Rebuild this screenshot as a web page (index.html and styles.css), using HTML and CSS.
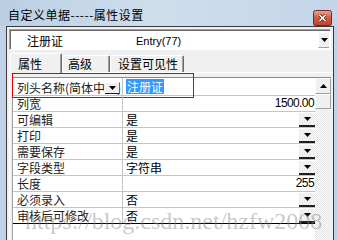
FILE: index.html
```html
<!DOCTYPE html>
<html lang="zh">
<head>
  <meta charset="UTF-8">
  <title>属性设置</title>
  <link rel="stylesheet" href="styles.css">
</head>
<body>
  <div class="window">
    <!-- Title bar -->
    <div class="titlebar">
      <span class="title">自定义单据-----属性设置</span>
      <span class="close">
        <svg width="19" height="16" viewBox="0 0 19 16">
          <defs>
            <linearGradient id="cg" x1="0" y1="0" x2="0" y2="1">
              <stop offset="0" stop-color="#e9a898"/>
              <stop offset="0.5" stop-color="#d25a43"/>
              <stop offset="1" stop-color="#c2402e"/>
            </linearGradient>
          </defs>
          <rect x="0.5" y="0.5" width="18" height="15" rx="2" fill="url(#cg)" stroke="#6d2b22"/>
          <path d="M6.5 5l6 6M12.5 5l-6 6" stroke="#4a1e16" stroke-width="3"/>
          <path d="M6.5 5l6 6M12.5 5l-6 6" stroke="#fff" stroke-width="1.6"/>
        </svg>
      </span>
    </div>

    <div class="client">
      <!-- Field selector -->
      <div class="combo">
        <span class="combo-name">注册证</span>
        <span class="combo-code">Entry(77)</span>
        <span class="combo-btn">
          <svg width="7" height="4" viewBox="0 0 7 4"><polygon points="0,0 7,0 3.5,4" fill="#000"/></svg>
        </span>
      </div>

      <!-- Tabs -->
      <div class="tabs">
        <div class="tab active">属性</div>
        <div class="tab t2">高级</div>
        <div class="tab t3">设置可见性</div>
      </div>

      <!-- Property grid -->
      <div class="panel">
        <div class="grid">
          <div class="rows">
            <div class="row first">
              <div class="key">列头名称(简体中文)
                <span class="key-btn">
                  <svg width="7" height="4" viewBox="0 0 7 4"><polygon points="0,0 7,0 3.5,4" fill="#000"/></svg>
                </span>
              </div>
              <div class="val"><span class="sel">注册证</span></div>
            </div>
            <div class="row"><div class="key">列宽</div><div class="val num">1500.00</div></div>
            <div class="row"><div class="key">可编辑</div><div class="val">是<span class="dd"><svg width="7" height="4" viewBox="0 0 7 4"><polygon points="0,0 7,0 3.5,4" fill="#000"/></svg></span></div></div>
            <div class="row"><div class="key">打印</div><div class="val">是<span class="dd"><svg width="7" height="4" viewBox="0 0 7 4"><polygon points="0,0 7,0 3.5,4" fill="#000"/></svg></span></div></div>
            <div class="row"><div class="key">需要保存</div><div class="val">是<span class="dd"><svg width="7" height="4" viewBox="0 0 7 4"><polygon points="0,0 7,0 3.5,4" fill="#000"/></svg></span></div></div>
            <div class="row"><div class="key">字段类型</div><div class="val">字符串<span class="dd"><svg width="7" height="4" viewBox="0 0 7 4"><polygon points="0,0 7,0 3.5,4" fill="#000"/></svg></span></div></div>
            <div class="row"><div class="key">长度</div><div class="val num">255</div></div>
            <div class="row"><div class="key">必须录入</div><div class="val">否<span class="dd"><svg width="7" height="4" viewBox="0 0 7 4"><polygon points="0,0 7,0 3.5,4" fill="#000"/></svg></span></div></div>
            <div class="row last"><div class="key">审核后可修改</div><div class="val">否<span class="dd"><svg width="7" height="4" viewBox="0 0 7 4"><polygon points="0,0 7,0 3.5,4" fill="#000"/></svg></span></div></div>
          </div>
          <div class="vscroll">
            <div class="sb-btn">
              <svg width="7" height="4" viewBox="0 0 7 4"><polygon points="0,4 7,4 3.5,0" fill="#000"/></svg>
            </div>
            <div class="sb-thumb"></div>
            <div class="sb-track"></div>
          </div>
        </div>
      </div>
    </div>

    <div class="watermark">https://blog.csdn.net/hzfw2008</div>
  </div>
</body>
</html>
```

FILE: styles.css
```css
* {
  box-sizing: border-box;
}
body {
  margin: 0;
  width: 337px;
  height: 240px;
  overflow: hidden;
  background-color: #c0d2e6;
  font-family: "Noto Sans CJK SC", sans-serif;
  font-size: 12px;
  color: #000;
}
.window {
  position: relative;
  height: 240px;
  display: flex;
  flex-direction: column;
}
.titlebar {
  height: 26px;
  flex: none;
  display: flex;
  align-items: flex-start;
  padding: 0 5px 0 8px;
  background: linear-gradient(to right, #bacee4, #cfdeed 45%, #c3d5e9);
}
.title {
  margin-top: 8px;
  line-height: 14px;
  letter-spacing: 0.5px;
}
.close {
  margin-left: auto;
  margin-top: 10px;
  height: 16px;
  display: flex;
}
.client {
  flex: 1;
  margin: 0 3px 0 6px;
  border: 1px solid #3a3a3a;
  border-bottom: none;
  background-color: #f0f0f0;
  display: flex;
  flex-direction: column;
  min-height: 0;
}
.combo {
  margin: 2px 2px 0 2px;
  height: 21px;
  flex: none;
  display: flex;
  align-items: center;
  background-color: #fff;
  border: 1px solid;
  border-color: #a0a0a0 #fff #fff #a0a0a0;
  box-shadow: inset 1px 1px #696969;
  padding-top: 3px;
}
.combo-name {
  width: 126px;
  padding-left: 17px;
  line-height: 14px;
}
.combo-code {
  font-family: "Liberation Sans", sans-serif;
  font-size: 11px;
  line-height: 14px;
}
.combo-btn {
  margin-left: auto;
  margin-right: 1px;
  margin-top: -1px;
  width: 11px;
  height: 15px;
  display: flex;
  align-items: center;
  justify-content: center;
  background-color: #f0f0f0;
  border-left: 1px solid #fff;
  border-bottom: 1px solid #a0a0a0;
}
.tabs {
  display: flex;
  align-items: flex-end;
  height: 19px;
  flex: none;
  margin-top: 3px;
  padding-left: 3px;
}
.tab {
  width: 48px;
  height: 17px;
  padding-left: 5px;
  line-height: 15px;
  border-top: 1px solid #fff;
  border-left: 1px solid #fff;
  border-right: 1px solid #696969;
  border-radius: 2px 2px 0 0;
  box-shadow: inset -1px 0 #a0a0a0;
}
.tab.active {
  width: 52px;
  height: 20px;
  padding-left: 7px;
  padding-top: 2px;
  margin-bottom: -1px;
  position: relative;
  z-index: 1;
  background-color: #f0f0f0;
}
.tab.t3 {
  width: 74px;
  padding-left: 7px;
}
.panel {
  flex: 1;
  margin-left: 2px;
  border-top: 1px solid #fff;
  border-left: 1px solid #fff;
  padding: 4px 2px 0 2px;
  display: flex;
  min-height: 0;
}
.grid {
  flex: 1;
  display: flex;
  border-top: 1px solid #8a8a8a;
  border-left: 1px solid #a0a0a0;
  background-color: #fff;
}
.rows {
  flex: 1;
}
.row {
  height: 16px;
  display: flex;
  border-bottom: 1px solid #c4c4c4;
  line-height: 15px;
}
.row.first {
  height: 18px;
  position: relative;
}
.row.first::after {
  content: "";
  position: absolute;
  left: -1px;
  top: -5px;
  width: 180px;
  height: 23px;
  border: 1px solid #e80000;
}
.row.last {
  border-bottom-color: #000;
}
.key {
  width: 110px;
  flex: none;
  padding-left: 4px;
  border-right: 1px solid #c4c4c4;
  white-space: nowrap;
  overflow: hidden;
  position: relative;
  color: #222;
}
.row.first .key {
  padding-top: 2px;
}
.key-btn {
  position: absolute;
  right: 2px;
  top: 4px;
  width: 15px;
  height: 12px;
  display: flex;
  align-items: center;
  justify-content: center;
  background-color: #f0f0f0;
  border-top: 1px solid #fff;
  border-bottom: 1px solid #202020;
  border-right: 1px solid #696969;
}
.val {
  flex: 1;
  display: flex;
  align-items: center;
  padding-left: 3px;
}
.val.num {
  justify-content: flex-end;
  padding-right: 1px;
  font-family: "Liberation Sans", sans-serif;
  letter-spacing: -0.6px;
}
.sel {
  background-color: #3399ff;
  color: #fff;
  padding: 0 1px;
  line-height: 15px;
}
.dd {
  margin-left: auto;
  width: 16px;
  height: 14px;
  display: flex;
  align-items: center;
  justify-content: center;
  background-color: #f0f0f0;
  border-bottom: 2px solid #202020;
}
.vscroll {
  width: 16px;
  display: flex;
  flex-direction: column;
}
.sb-btn,
.sb-thumb {
  height: 16px;
  flex: none;
  display: flex;
  align-items: center;
  justify-content: center;
  background-color: #f0f0f0;
  border: 1px solid;
  border-color: #fff #a0a0a0 #a0a0a0 #fff;
}
.sb-thumb {
  height: 15px;
}
.sb-track {
  flex: 1;
  background: repeating-conic-gradient(#ffffff 0 25%, #e2e2e2 0 50%) 0 0 / 2px 2px;
}
.watermark {
  position: absolute;
  left: 25px;
  top: 209px;
  font-family: "Liberation Serif", serif;
  font-size: 24px;
  line-height: 24px;
  color: rgba(130, 130, 130, 0.45);
  white-space: nowrap;
}
```
